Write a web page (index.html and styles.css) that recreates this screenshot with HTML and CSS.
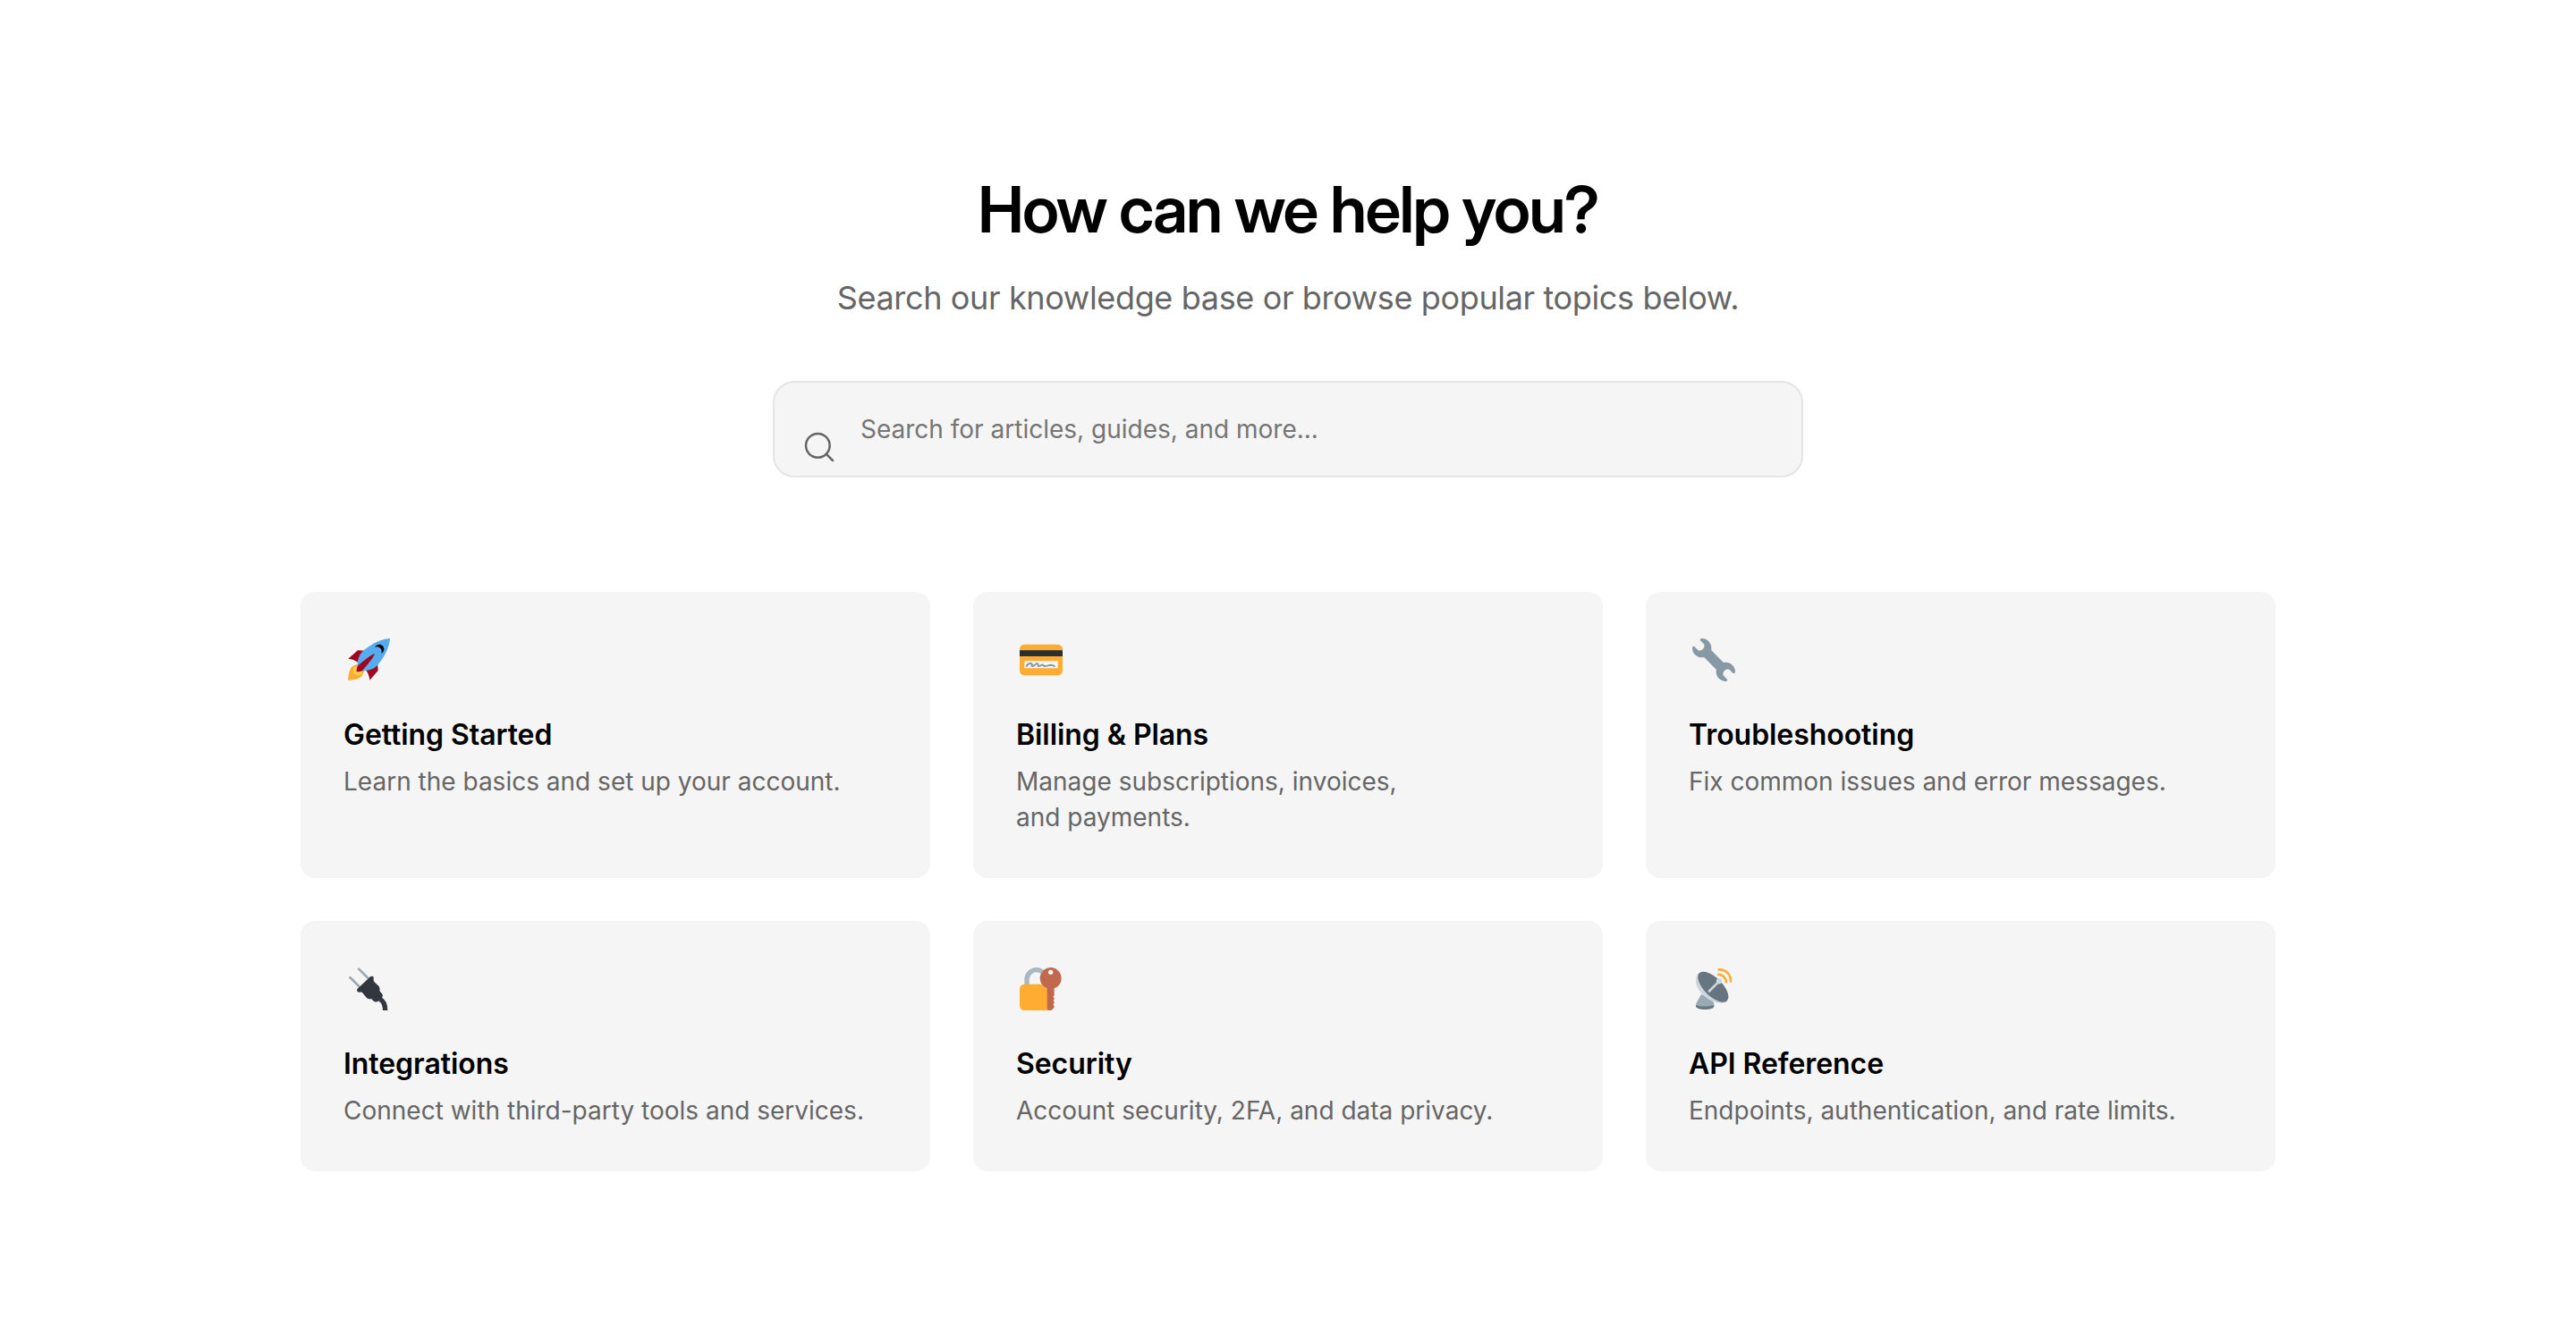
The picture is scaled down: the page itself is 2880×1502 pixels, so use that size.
FILE: index.html
```html
<!DOCTYPE html>
<html lang="en">
<head>
    <meta charset="UTF-8">
    <meta name="viewport" content="width=device-width, initial-scale=1.0">
    <title>Help Center</title>
    <link rel="stylesheet" href="styles.css">
</head>
<body>
    <main class="help-center">
        <header class="hero">
            <h1>How can we help you?</h1>
            <p>Search our knowledge base or browse popular topics below.</p>
            <div class="search">
                <svg class="search-icon" viewBox="0 0 24 24" fill="none" stroke="currentColor" stroke-width="1.5" stroke-linecap="round">
                    <circle cx="11" cy="11" r="8"/>
                    <path d="M21 21l-4.35-4.35"/>
                </svg>
                <input type="text" placeholder="Search for articles, guides, and more...">
            </div>
        </header>

        <section class="topics">
            <a class="card">
                <!-- Rocket -->
                <svg class="card-icon" viewBox="0 0 36 36">
                    <path fill="#A0041E" d="M1 17l8-7 16 1 1 16-7 8s.001-5.999-6-12-12-6-12-6z"/>
                    <path fill="#FFAC33" d="M.973 35s-.036-7.979 2.985-11S15 21.187 15 21.187 14.999 29 11.999 32c-3 3-11.026 3-11.026 3z"/>
                    <circle fill="#FFCC4D" cx="8.999" cy="27" r="4"/>
                    <path fill="#55ACEE" d="M35.999 0s-10 0-22 10c-6 5-6 14-4 16s11 2 16-4c10-12 10-22 10-22z"/>
                    <path d="M26.999 5c-1.623 0-3.013.971-3.641 2.36.502-.227 1.055-.36 1.641-.36 2.209 0 4 1.791 4 4 0 .586-.133 1.139-.359 1.64 1.389-.627 2.359-2.017 2.359-3.64 0-2.209-1.791-4-4-4z"/>
                    <path fill="#A0041E" d="M8 28s0-4 1-5 13.001-10.999 14-10-9.001 13-10.001 14S8 28 8 28z"/>
                </svg>
                <h3>Getting Started</h3>
                <p>Learn the basics and set up your account.</p>
            </a>
            <a class="card">
                <!-- Credit card -->
                <svg class="card-icon" viewBox="0 0 36 36">
                    <rect fill="#FFAC33" y="5" width="36" height="26" rx="4"/>
                    <path fill="#292F33" d="M0 10h36v5H0z"/>
                    <path fill="#F4F7F9" d="M4 19h28v6H4z"/>
                    <path fill="none" stroke="#8899A6" stroke-width="1.5" stroke-linecap="round" stroke-linejoin="round" d="M5.8 23.300c.8-1.600 2.400-2.500 3.900-2.400 1.400.2-.3 2.200.8 2.400 1.500.2 2.700-2.400 4.500-2.200 1.300.3-.4 2 .9 2.200 1.400.2 2.200-1.400 3.400-1.100 1 .2.600 1.100 1.800 1.100 1.900 0 3.200-.9 5-1 1.400 0 2.300.4 3 1"/>
                </svg>
                <h3>Billing &amp; Plans</h3>
                <p>Manage subscriptions, invoices,<br>and payments.</p>
            </a>
            <a class="card">
                <!-- Wrench -->
                <svg class="card-icon" viewBox="0 0 36 36">
                    <path fill="#8899A6" d="M27.989 19.977c-.622 0-1.225.078-1.806.213L15.811 9.818c.134-.581.212-1.184.212-1.806C16.023 3.587 12.436 0 8.012 0 7.11 0 5.91.916 6.909 1.915l2.997 2.997s.999 1.998-.999 3.995-3.996.998-3.996.998L1.915 6.909C.916 5.91 0 7.105 0 8.012c0 4.425 3.587 8.012 8.012 8.012.622 0 1.225-.078 1.806-.212l10.371 10.371c-.135.581-.213 1.184-.213 1.806 0 4.425 3.588 8.011 8.012 8.011.901 0 2.101-.916 1.102-1.915l-2.997-2.997s-.999-1.998.999-3.995 3.995-.999 3.995-.999l2.997 2.997c1 .999 1.916-.196 1.916-1.102 0-4.425-3.587-8.012-8.011-8.012z"/>
                </svg>
                <h3>Troubleshooting</h3>
                <p>Fix common issues and error messages.</p>
            </a>
            <a class="card">
                <!-- Plug -->
                <svg class="card-icon" viewBox="0 0 36 36">
                    <path stroke="#99AAB5" stroke-width="2" stroke-linecap="round" d="M2.600 8.400l8.400 8.400M9.800 1.200l8.400 8.400"/>
                    <path fill="none" stroke="#31373D" stroke-width="4" d="M27.500 26.500c3 1.500 4.500 5 4.500 9.500"/>
                    <path fill="#31373D" d="M19.400 7.900c1.300-1.300 3.500-.2 2.900 1.700-.3 1 0 1.900.8 2.700l3.200 3.100c1 1 1.200 2.200 1.100 3.500 0 .9.200 1.400.8 2 .8.800 1.700 1.300 1.700 2.700 0 1.200-.6 1.700-1.400 2.500l-1.700 1.700c-.9.900-1.500 1.200-2.700 1-1.600-.2-1.900-.8-2.600-1.500-.6-.6-1.200-.7-2.100-.8-1.300-.1-2.400-.4-3.300-1.400l-2.900-3.500c-.6-.8-1.300-1.200-2.200-.9-2 .5-3.500-1.400-2.200-2.900z"/>
                </svg>
                <h3>Integrations</h3>
                <p>Connect with third-party tools and services.</p>
            </a>
            <a class="card">
                <!-- Lock with key -->
                <svg class="card-icon" viewBox="0 0 36 36">
                    <path fill="none" stroke="#AAB8C2" stroke-width="4" d="M6 17v-7a8 8 0 0 1 16 0v7"/>
                    <rect fill="#FFAC33" y="14" width="28" height="22" rx="4"/>
                    <path fill="#C1694F" d="M35 9a9 9 0 1 0-12 8.480V34c0 1.100.9 2 2 2h.6c.8 0 1.300-.3 1.800-.8l1.200-1.300c.6-.7.500-1.500 0-2.100-.5-.5-.5-1 0-1.500.6-.6.6-1.300 0-1.900-.4-.4-.4-.8 0-1.200.6-.6.600-1.300 0-1.900-.5-.5-.5-1 0-1.500.3-.3.400-.6.400-1v-5.320A9 9 0 0 0 35 9z"/>
                    <circle fill="#F5F5F5" cx="26" cy="4" r="2"/>
                </svg>
                <h3>Security</h3>
                <p>Account security, 2FA, and data privacy.</p>
            </a>
            <a class="card">
                <!-- Satellite antenna -->
                <svg class="card-icon" viewBox="0 0 36 36">
                    <path fill="#66757F" d="M3 31.500h15.300v1c0 1.800-3.400 2.800-7.700 2.800S3 34.300 3 32.500z"/>
                    <path fill="#99AAB5" d="M7.500 22.500L3.300 30c-1 2 2.700 2.700 7.300 2.700s8.600-.9 7.600-2.700l-2-3z"/>
                    <path fill="#CCD6DD" d="M5.600 4.500C.8 9.300 2.500 17 9.500 23.500S26.500 32 29.500 28z"/>
                    <ellipse fill="#66757F" cx="17.500" cy="16.300" rx="16.400" ry="7.600" transform="rotate(45 17.500 16.300)"/>
                    <path stroke="#CCD6DD" stroke-width="2" stroke-linecap="round" d="M14.200 19.900l8-8"/>
                    <circle fill="#CCD6DD" cx="22.500" cy="11.500" r="2.400"/>
                    <path fill="none" stroke="#FFAC33" stroke-width="2" stroke-linecap="round" d="M21.800 5.900c3.800 0 6.500 2.600 6.500 6.300M22.200 1.800c5.700-.3 10.200 4 10 9.800"/>
                </svg>
                <h3>API Reference</h3>
                <p>Endpoints, authentication, and rate limits.</p>
            </a>
        </section>
    </main>
</body>
</html>
```
FILE: styles.css
```css
* {
    box-sizing: border-box;
    margin: 0;
    padding: 0;
}

body {
    font-family: Inter, sans-serif;
    background-color: #fff;
    color: #000;
}

.help-center {
    max-width: 2400px;
    margin: 0 auto;
    padding: 192px 96px;
}

.hero {
    text-align: center;
    margin-bottom: 128px;
}

.hero h1 {
    font-family: "Inter Display", Inter, sans-serif;
    font-variation-settings: "opsz" 32;
    font-size: 72px;
    font-weight: 600;
    line-height: 84px;
    letter-spacing: -0.025em;
    margin-bottom: 28px;
}

.hero p {
    font-size: 36px;
    line-height: 58px;
    letter-spacing: -0.01em;
    color: #666;
    margin-bottom: 64px;
}

.search {
    position: relative;
    width: 1152px;
    margin: 0 auto;
}

/* Sits over the input's left padding */
.search-icon {
    position: absolute;
    left: 32px;
    top: 50%;
    width: 40px;
    height: 40px;
    color: #666;
}

.search input {
    display: block;
    width: 100%;
    height: 108px;
    padding: 0 32px 0 96px;
    border: 2px solid #e5e5e5;
    border-radius: 24px;
    background-color: #f5f5f5;
    font-family: inherit;
    font-size: 28px;
}

.search input::placeholder {
    color: #757575;
}

.topics {
    display: grid;
    grid-template-columns: repeat(3, 1fr);
    gap: 48px;
}

.card {
    background-color: #f5f5f5;
    border-radius: 16px;
    padding: 48px;
}

.card-icon {
    display: block;
    width: 48px;
    height: 48px;
    margin: 4px 0 34px 4px;
}

.card h3 {
    font-size: 32px;
    font-weight: 600;
    line-height: 52px;
    letter-spacing: -0.002em;
    margin-bottom: 6px;
}

.card p {
    font-size: 28px;
    line-height: 40px;
    color: #666;
}
```
